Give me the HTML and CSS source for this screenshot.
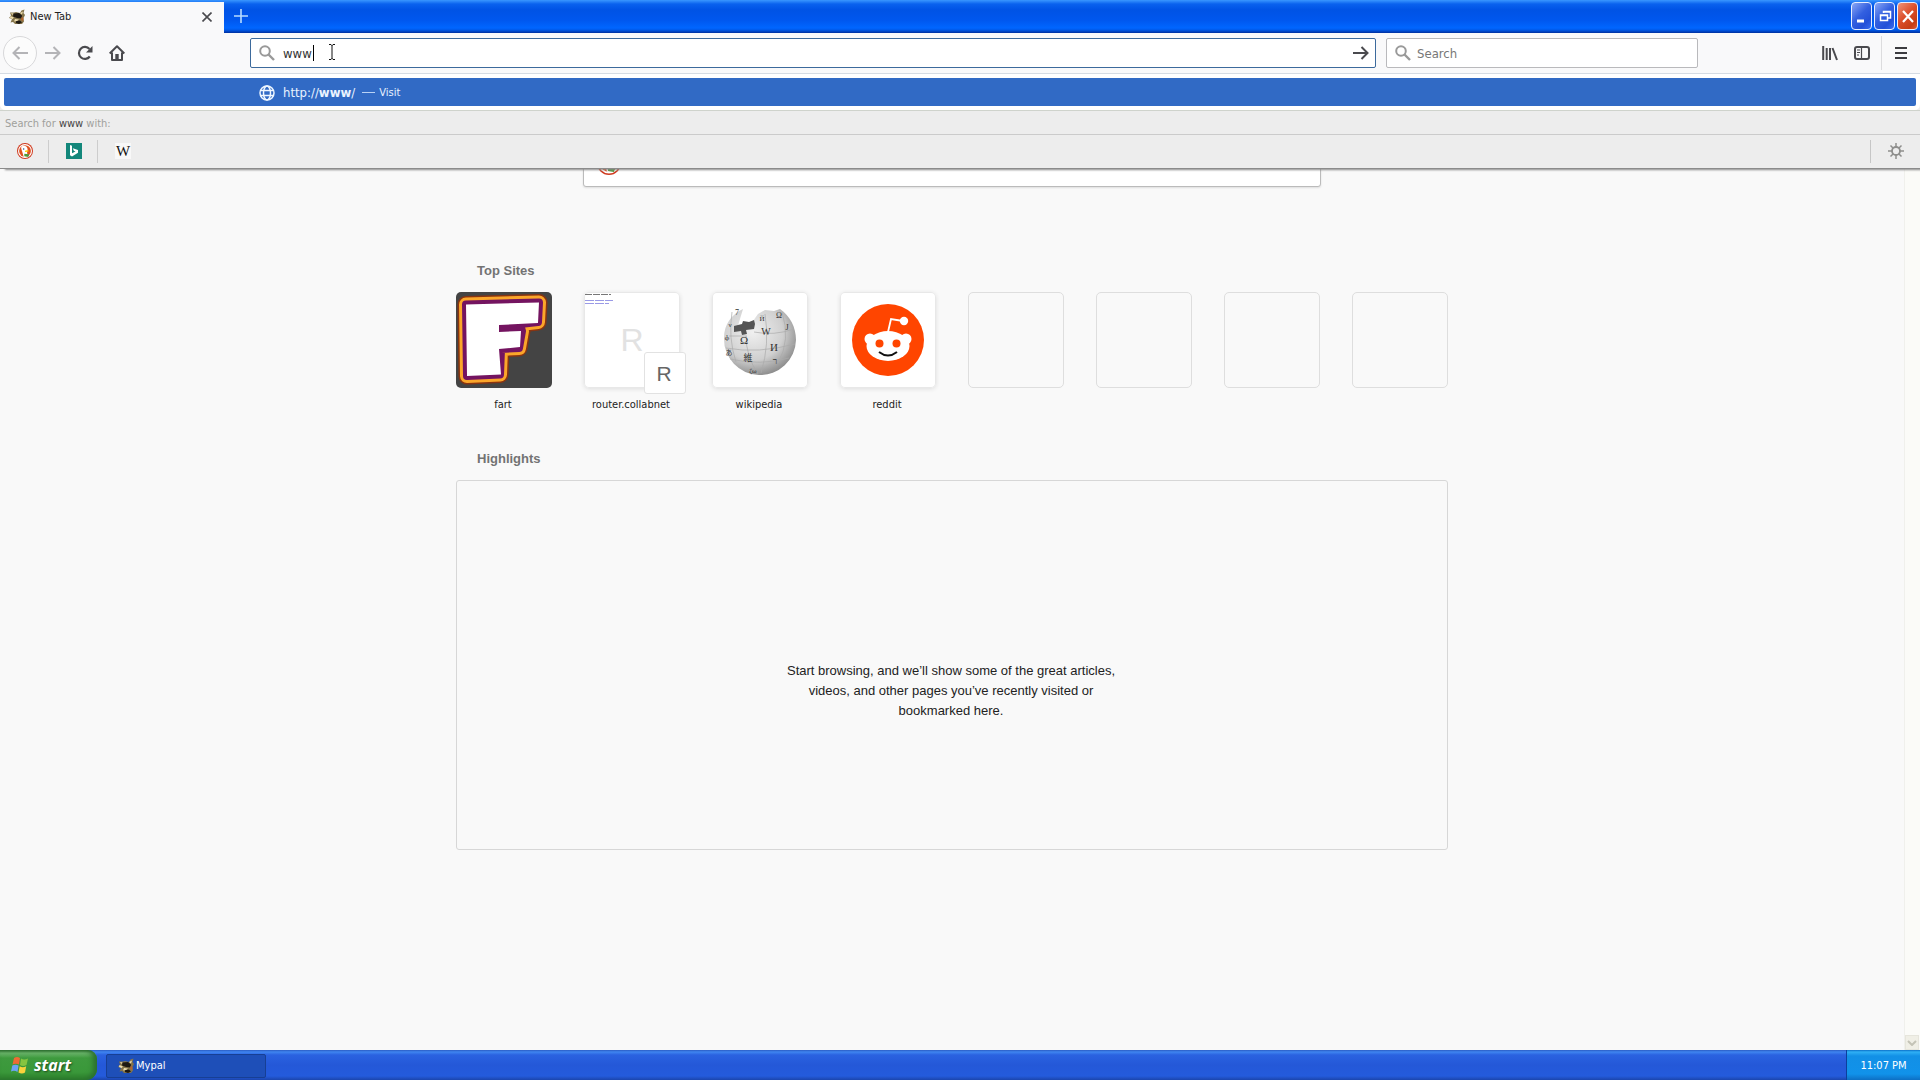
FILE: index.html
```html
<!DOCTYPE html>
<html lang="en">
<head>
<meta charset="utf-8">
<title>New Tab</title>
<link rel="stylesheet" href="styles.css">
</head>
<body>
<svg width="0" height="0" class="defs" aria-hidden="true">
  <symbol id="mypal" viewBox="0 0 16 16">
    <path d="M1 3.500 5 3.500 7 3 11 4 12.500 1.500 15.500.5 14.500 4 16 6 14.500 9 15 12.500 13 15 6 15 4 13 1.500 13.500 3 10 0 9 2 6.500z" fill="#84744a"/>
    <path d="M4.500 4.500 10 4 13 6.500 12.500 9.500 8 9 4 7.500zM7 12l4-.5 2 2-3 1.500-3-1z" fill="#1d1812"/>
    <path d="M1.500 7 5 8.500 3.500 10 1 9zM6 10 10 10.500 8 12 5 12.500zM11 4 14 2.500 13 5.500zM2 4l2.500.5L3.500 6z" fill="#eddcae"/>
    <path d="M12.500 8 14.500 9 14 12 12 11z" fill="#b5652f"/>
  </symbol>
  <symbol id="glass" viewBox="0 0 16 16">
    <circle cx="6" cy="6" r="4.800" fill="none" stroke="#999" stroke-width="2"/>
    <path d="M9.500 9.500 15 15" stroke="#999" stroke-width="2.400"/>
  </symbol>
  <symbol id="duck" viewBox="0 0 24 24">
    <circle cx="12" cy="12" r="12" fill="#cf3a1f"/>
    <circle cx="12" cy="12" r="10.500" fill="#fff"/>
    <circle cx="12" cy="12" r="8.800" fill="#e0501f"/>
    <path d="M7 5c4-2.500 9 0 9 5l-1 3 1 7.500c-2 .8-4 .7-6 .2L7.500 12C6.500 9 5.500 7 7 5z" fill="#fff"/>
    <circle cx="10" cy="9" r="1.200" fill="#2d4f8e"/>
    <path d="M12 11.500c2-1 4-1 6 0-1 1.500-4 2-6 2z" fill="#fdd20a"/>
    <path d="M11 16l7 1-1 4-6-1z" fill="#4c9a3a"/>
  </symbol>
</svg>

<div class="window">
  <header class="chrome">
    <div class="titlebar">
      <div class="tab">
        <svg width="16" height="16"><use href="#mypal"/></svg>
        <span class="tab-title">New Tab</span>
        <button class="plain" aria-label="Close tab">
          <svg width="10" height="10" viewBox="0 0 10 10"><path d="M.5.5l9 9M9.500.5l-9 9" stroke="#4a4a4e" stroke-width="1.600"/></svg>
        </button>
      </div>
      <button class="plain tab-new" aria-label="New tab">
        <svg width="14" height="14" viewBox="0 0 14 14"><path d="M7 0v14M0 7h14" stroke="#b7dcff" stroke-width="1.600"/></svg>
      </button>
      <div class="controls">
        <button class="control" aria-label="Minimize"><svg width="18" height="26" viewBox="0 0 18 26"><path d="M4 18h7" stroke="#fff" stroke-width="3"/></svg></button>
        <button class="control" aria-label="Restore"><svg width="18" height="26" viewBox="0 0 18 26" fill="none" stroke="#fff"><path d="M7.500 10V8.500h7v6.500H12M7 9h8" stroke-width="1.500"/><path d="M4.500 12h7v5.500h-7zM4 12.500h8" stroke-width="1.500"/></svg></button>
        <button class="control control-close" aria-label="Close"><svg width="18" height="26" viewBox="0 0 18 26"><path d="M4 8l10 11M14 8L4 19" stroke="#fff" stroke-width="2.200"/></svg></button>
      </div>
    </div>

    <div class="toolbar">
      <nav class="nav">
        <button class="plain nav-back" aria-label="Back"><svg width="16" height="14" viewBox="0 0 16 14" fill="none" stroke="#b4b4b7" stroke-width="2"><path d="M16 7H1.500M7.500 1l-6 6 6 6"/></svg></button>
        <button class="plain nav-btn" aria-label="Forward"><svg width="16" height="14" viewBox="0 0 16 14" fill="none" stroke="#b4b4b7" stroke-width="2"><path d="M0 7h14.500M8.500 1l6 6-6 6"/></svg></button>
        <button class="plain nav-btn" aria-label="Reload"><svg width="16" height="16" viewBox="0 0 16 16"><path d="M12.800 11.500a6 6 0 1 1-.3-7.500" fill="none" stroke="#4a4a4e" stroke-width="2.200"/><path d="M15.500 1v6.500H9z" fill="#4a4a4e"/></svg></button>
        <button class="plain nav-btn" aria-label="Home"><svg width="16" height="16" viewBox="0 0 16 16"><path d="M.7 8.500 8 1.300l7.300 7.200M3 7.500V15h10V7.500" fill="none" stroke="#4a4a4e" stroke-width="2" stroke-linejoin="round"/><path d="M6.300 14V9h3.400v5z" fill="#4a4a4e"/></svg></button>
      </nav>
      <div class="field url-field">
        <svg width="16" height="16"><use href="#glass"/></svg>
        <input class="field-input" id="url" type="text" value="www" aria-label="Address" size="3">
        <button class="plain" aria-label="Go"><svg width="16" height="14" viewBox="0 0 16 14" fill="none" stroke="#4a4a4e" stroke-width="2"><path d="M0 7h14.500M8.500 1l6 6-6 6"/></svg></button>
        <span class="caret"></span>
        <svg class="pointer" width="8" height="16" viewBox="0 0 8 16"><path d="M1 .5h2l1 1 1-1h2M4 1v14M1 15.500h2l1-1 1 1h2" fill="none" stroke="#111"/></svg>
      </div>
      <div class="field search-field">
        <svg width="16" height="16"><use href="#glass"/></svg>
        <input class="field-input" type="text" placeholder="Search" aria-label="Search">
      </div>
      <div class="tools">
        <button class="plain nav-btn" aria-label="Library"><svg width="16" height="16" viewBox="0 0 16 16"><path d="M1.200 1v14M4.700 3v12M8 3v12M10.500 3l4.500 12" stroke="#4a4a4e" stroke-width="2"/></svg></button>
        <button class="plain nav-btn" aria-label="Sidebars"><svg width="16" height="14" viewBox="0 0 16 14" fill="none" stroke="#4a4a4e"><rect x="1" y="1" width="14" height="12" rx="2" stroke-width="2"/><path d="M7.500 1v12M3 4h3M3 6.500h3M3 9h2" stroke-width="1.200"/></svg></button>
        <span class="tool-line"></span>
        <button class="plain" aria-label="Menu"><svg width="12" height="12" viewBox="0 0 12 12"><path d="M0 1h12M0 6h12M0 11h12" stroke="#3c3c40" stroke-width="2"/></svg></button>
      </div>
    </div>

    <div class="popup">
      <a class="suggestion" href="#">
        <svg width="16" height="16" viewBox="0 0 16 16" fill="none" stroke="#eef6ff" stroke-width="1.500"><circle cx="8" cy="8" r="7"/><ellipse cx="8" cy="8" rx="3.500" ry="7"/><path d="M1.500 5.500h13M1.500 10.500h13"/></svg>
        <span class="suggestion-url">http://<b>www</b>/</span>
        <span class="dash"></span>
        <span class="suggestion-action">Visit</span>
      </a>
      <p class="search-with">Search for <span class="term">www</span> with:</p>
      <div class="engines">
        <button class="plain engine" aria-label="DuckDuckGo"><svg width="16" height="16"><use href="#duck"/></svg></button>
        <button class="plain engine" aria-label="Bing"><svg width="16" height="16" viewBox="0 0 16 16"><path d="M0 0h16v16H0z" fill="#13877b"/><path d="M4 2l2 .8v7.400l3.500-1.700-1.700-.8-1-2.500L12 7v2.800L6 13.500l-2-1.200z" fill="#fff"/></svg></button>
        <button class="plain engine engine-wiki" aria-label="Wikipedia"><span class="wiki-mark">W</span></button>
        <button class="plain engine-settings" aria-label="Search settings"><svg width="16" height="16" viewBox="0 0 16 16" fill="none" stroke="#8e8e8c"><circle cx="8" cy="8" r="4" stroke-width="1.800"/><path d="M8 0v4M8 12v4M0 8h4M12 8h4M2.500 2.500l2.500 2.500M11 11l2.500 2.500M13.500 2.500 11 5M5 11l-2.500 2.500" stroke-width="1.500"/></svg></button>
      </div>
    </div>
  </header>

  <div class="viewport">
    <main class="page">
      <div class="search-card"><svg width="24" height="24"><use href="#duck"/></svg></div>

      <section>
        <h2 class="heading">Top Sites</h2>
        <div class="sites">
          <a class="site" href="#">
            <svg class="tile tile-dark" viewBox="0 0 96 96">
              <g stroke-linejoin="round">
                <path d="M10 12.500 83 10.500 82 30 64 32l2 7-3 17-18 1-1 25.500-33 1.500z" fill="none" stroke="#8a3410" stroke-width="17"/>
                <path d="M10 12.500 83 10.500 82 30 64 32l2 7-3 17-18 1-1 25.500-33 1.500z" fill="#fba62a" stroke="#fba62a" stroke-width="14"/>
                <path d="M10 12.500 83 10.500 82 30 64 32l2 7-3 17-18 1-1 25.500-33 1.500z" fill="#741460" stroke="#741460" stroke-width="8"/>
                <path d="M10 12.500 83 10.500 82 31 43 33v7l22-1-1 16-21 2 2 25.500-34 1.500z" fill="#fff"/>
              </g>
            </svg>
            <span class="site-name">fart</span>
          </a>
          <a class="site" href="#">
            <span class="tile tile-card">
              <svg class="thumb" width="32" height="14" viewBox="0 0 32 14"><path d="M1 2.500h26" stroke="#777" stroke-dasharray="7 1"/><path d="M1 8.500h28M1 11.500h24" stroke="#9a9ae6" stroke-dasharray="9 1"/></svg>
              <span class="letter">R</span>
              <span class="badge">R</span>
            </span>
            <span class="site-name">router.collabnet</span>
          </a>
          <a class="site" href="#">
            <span class="tile tile-card">
              <svg width="96" height="96" viewBox="0 0 96 96">
                <defs><radialGradient id="ball" cx=".4" cy=".35" r=".7"><stop offset="0" stop-color="#f0f0f0"/><stop offset=".6" stop-color="#d0d0d0"/><stop offset="1" stop-color="#858585"/></radialGradient></defs>
                <path d="M31 17c-11 5-19 15-19 29a36 36 0 0 0 72 2c0-13-6-24-16-31l-6 2-9-1-7 4-5 7-5 7-11 1z" fill="url(#ball)"/>
                <path d="M22 34l8-2 1-3 6 1 5-2 1 4-1 5-8 1 1 4-5 1-1-4-7 1z" fill="#555"/>
                <path d="M20 20q-4 26 4 50M34 44q0 20 12 38M53 22q5 30-4 59M70 20q9 28-4 51M14 56q32 6 69-4M18 67q30 7 59-1M42 40q20 4 40-3M17 44h18" fill="none" stroke="#aaa" stroke-width=".7"/>
                <g class="globe-text" text-anchor="middle">
                  <text x="32" y="52" font-size="11">Ω</text><text x="54" y="43" font-size="10">W</text><text x="62" y="59" font-size="11">И</text>
                  <text x="36" y="69" font-size="9">維</text><text x="63" y="72" font-size="9">ר</text><text x="75" y="38" font-size="8">J</text>
                  <text x="50" y="29" font-size="7">Й</text><text x="67" y="26" font-size="8">Ω</text><text x="25" y="23" font-size="8">7</text>
                  <text x="15" y="48" font-size="7">ф</text><text x="18" y="35" font-size="7">ν</text><text x="17" y="63" font-size="7">あ</text><text x="41" y="81" font-size="7">ζω</text>
                </g>
              </svg>
            </span>
            <span class="site-name">wikipedia</span>
          </a>
          <a class="site" href="#">
            <span class="tile tile-card">
              <svg width="96" height="96" viewBox="0 0 96 96">
                <circle cx="48" cy="48" r="36" fill="#ff4500"/>
                <circle cx="30" cy="47" r="5.500" fill="#fff"/><circle cx="66" cy="47" r="5.500" fill="#fff"/>
                <ellipse cx="48" cy="54" rx="21.500" ry="15" fill="#fff"/>
                <path d="M48 40l3-13 12 2" fill="none" stroke="#fff" stroke-width="1.800"/>
                <circle cx="64" cy="29" r="4.200" fill="#fff"/>
                <circle cx="39.500" cy="51.500" r="4" fill="#ff4500"/><circle cx="56.500" cy="51.500" r="4" fill="#ff4500"/>
                <path d="M39 60q9 7 18 0" fill="none" stroke="#111" stroke-width="2"/>
              </svg>
            </span>
            <span class="site-name">reddit</span>
          </a>
          <span class="tile tile-empty"></span>
          <span class="tile tile-empty"></span>
          <span class="tile tile-empty"></span>
          <span class="tile tile-empty"></span>
        </div>
      </section>

      <section class="highlights">
        <h2 class="heading">Highlights</h2>
        <div class="empty-box"><p class="empty-text">Start browsing, and we’ll show some of the great articles, videos, and other pages you’ve recently visited or bookmarked here.</p></div>
      </section>
    </main>
    <div class="scrollbar"><button class="plain scroll-down" aria-label="Scroll down"><svg width="10" height="6" viewBox="0 0 10 6"><path d="M1 1l4 4 4-4" fill="none" stroke="#c4c3b6" stroke-width="2"/></svg></button></div>
  </div>
</div>

<footer class="taskbar">
  <button class="start">
    <svg width="18" height="18" viewBox="0 0 18 18"><path d="M3 2q3-2 6 0L8 8.500Q5 7 1.500 8.500z" fill="#ee6a35"/><path d="M10 2.500q3 2 7 0L15.500 9Q12 11 9 9z" fill="#86c440"/><path d="M1.300 9.500q3-1.500 6.300 0L6.500 16q-3-2-6.500-.5z" fill="#6da3f5"/><path d="M8.700 10.200q3 2 6.500 0L14 16.500q-3 2-6.500 0z" fill="#f9d23c"/></svg>
    <span>start</span>
  </button>
  <button class="task">
    <svg width="16" height="16"><use href="#mypal"/></svg>
    <span>Mypal</span>
  </button>
  <time class="tray">11:07 PM</time>
</footer>
</body>
</html>
```

FILE: styles.css
```css
* { box-sizing: border-box; }

body {
  margin: 0;
  min-height: 100vh;
  display: flex;
  flex-direction: column;
  background: #f9f9f9;
  font: 11px/16px "DejaVu Sans Condensed", "Noto Sans", sans-serif;
  color: #222;
}

svg { display: block; flex: none; }
.defs { position: absolute; }
a { color: inherit; text-decoration: none; }

.plain {
  display: flex;
  align-items: center;
  justify-content: center;
  padding: 0;
  border: 0;
  background: none;
}

.window { flex: 1; display: flex; flex-direction: column; }
.chrome { position: relative; z-index: 1; }

/* Title bar */
.titlebar {
  display: flex;
  height: 33px;
  padding-top: 2px;
  background: linear-gradient(#3a97ff 0, #0a62ee 4px, #0053e5 10px, #0057ee 20px, #0066ff 28px, #0059e8 30px, #002f9e 33px);
}
.tab {
  display: flex;
  align-items: center;
  width: 224px;
  padding: 0 12px 1px 9px;
  background: #f9f9fa;
}
.tab-title { flex: 1; margin-left: 5px; }
.tab-new { width: 33px; height: 28px; }
.controls { display: flex; gap: 2px; margin-left: auto; padding-right: 2px; }
.control {
  display: flex;
  align-items: center;
  justify-content: center;
  width: 21px;
  height: 28px;
  padding: 0;
  border: 1px solid #e6eeff;
  border-radius: 4px;
  background: linear-gradient(135deg, #8aa6f5, #3360e0 45%, #2350d8 75%, #3a6cf0);
}
.control-close { background: linear-gradient(135deg, #ef9479, #dc4f2b 45%, #c63d14 80%, #dd5a34); }

/* Toolbar */
.toolbar {
  display: flex;
  align-items: center;
  height: 41px;
  padding: 0 13px 0 3px;
  border-bottom: 1px solid #d5dbe3;
  background: #f9f9fa;
}
.nav { display: flex; align-items: center; }
.nav-back {
  width: 34px;
  height: 34px;
  border: 1px solid #d8d8da;
  border-radius: 50%;
  background: #fcfcfc;
}
.nav-btn { width: 32px; height: 32px; }
.field {
  position: relative;
  display: flex;
  align-items: center;
  height: 30px;
  padding: 0 7px 0 8px;
  border: 1px solid #b9b9bc;
  border-radius: 2px;
  background: #fff;
}
.url-field { flex: 1; margin: 0 10px 0 117px; padding-right: 6px; border-color: #3c6a9c; }
.search-field { width: 312px; }
.field-input {
  flex: 1;
  min-width: 0;
  height: 24px;
  margin-left: 8px;
  padding: 0;
  border: 0;
  outline: 0;
  background: none;
  font: 13px/16px "DejaVu Sans Condensed", "Noto Sans", sans-serif;
  color: #333;
}
.search-field .field-input { margin-left: 6px; }
.field-input::placeholder { color: #777; opacity: 1; }
.caret { position: absolute; left: 62px; top: 6px; width: 1px; height: 16px; background: #000; }
.pointer { position: absolute; left: 77px; top: 5px; }
.tools { display: flex; align-items: center; margin-left: 116px; }
.tool-line { width: 1px; height: 34px; margin: 0 13px 0 3px; background: #dcdcde; }

/* Address suggestions */
.popup {
  position: absolute;
  top: 100%;
  left: 0;
  right: 0;
  background: #ededed;
  border-bottom: 1px solid #8b8b8b;
  box-shadow: 4px 2px 2px -1px #888;
}
.popup::before { content: ""; display: block; height: 4px; background: #fff; }
.suggestion {
  display: flex;
  align-items: center;
  height: 28px;
  margin: 0 4px;
  padding: 1px 0 0 255px;
  border-radius: 2px;
  background: #316ac5;
  box-shadow: 0 0 0 4px #fff;
  color: #e9f3ff;
}
.suggestion-url { margin-left: 8px; font-size: 13px; }
.dash { width: 13px; height: 1px; margin: 0 4px 0 7px; background: #b9d2f5; }
.suggestion-action { padding-top: 1px; }
.search-with {
  margin: 4px 0 0;
  padding: 5px 5px 2px;
  border-top: 1px solid #cfd3cc;
  border-bottom: 1px solid #cbcbcb;
  color: #a0a09c;
}
.term { color: #444; }
.engines { display: flex; align-items: center; height: 33px; padding-bottom: 1px; }
.engine { width: 49px; height: 23px; padding-left: 2px; border-right: 1px solid #cdcdcd; }
.engine-wiki { border-color: transparent; }
.wiki-mark {
  width: 16px;
  height: 16px;
  background: #f8f8f8;
  text-align: center;
  font: 15px/16px "Liberation Serif", serif;
  color: #111;
}
.engine-settings { width: 50px; height: 23px; margin-left: auto; border-left: 1px solid #c6c6c6; }

/* New tab page */
.viewport { flex: 1; display: flex; }
.page { flex: 1; max-width: 992px; margin: 0 auto; padding-top: 64px; }
.search-card {
  display: flex;
  align-items: center;
  height: 49px;
  margin: 0 127px 74px 127px;
  padding-left: 13px;
  border: 1px solid #bbb;
  border-radius: 3px;
  background: #fff;
  box-shadow: 0 1px 2px #ddd;
}
.heading {
  margin: 0 0 11px;
  padding-left: 21px;
  font: bold 13px/20px "Liberation Sans", sans-serif;
  color: #737373;
}
.sites { display: flex; gap: 32px; }
.site { width: 96px; }
.tile { position: relative; display: block; width: 96px; height: 96px; border-radius: 5px; }
.tile-dark { background: #444; }
.tile-card { background: #fff; box-shadow: inset 0 0 0 1px #e8e8e8, 0 1px 4px #ddd; }
.tile-empty { border: 1px solid #dedede; }
.thumb { position: absolute; left: 0; top: 0; }
.letter { display: block; text-align: center; font: 32px/96px "Liberation Sans", sans-serif; color: #e2e2e2; }
.badge {
  position: absolute;
  right: -6px;
  bottom: -6px;
  width: 42px;
  height: 42px;
  padding-right: 2px;
  border: 1px solid #e2e2e2;
  border-radius: 3px;
  background: #fff;
  text-align: center;
  font: 21px/42px "Liberation Sans", sans-serif;
  color: #666;
}
.globe-text { font-family: "Liberation Serif", "Noto Sans CJK JP", serif; fill: #333; }
.site-name { display: block; margin: 9px 2px 0 0; text-align: center; white-space: nowrap; }
.highlights { margin-top: 36px; }
.empty-box {
  display: flex;
  align-items: center;
  justify-content: center;
  min-height: 370px;
  border: 1px solid #d7d7d7;
  border-radius: 3px;
}
.empty-text {
  width: 340px;
  margin: 0 0 0 -2px;
  padding-top: 52px;
  text-align: center;
  font: 13px/20px "Liberation Sans", sans-serif;
}
.scrollbar { display: flex; align-items: flex-end; width: 16px; background: #fbfbf8; border-left: 1px solid #f0f0ec; }
.scroll-down { width: 14px; height: 15px; background: #f0efe6; border: 1px solid #e6e5dc; }

/* Taskbar */
.taskbar {
  display: flex;
  height: 30px;
  background: linear-gradient(#2a5cc4 0, #3f85f0 2px, #2a62e0 5px, #2458d8 15px, #245bdc 26px, #1b45ad);
  color: #fff;
}
.start {
  display: flex;
  align-items: center;
  gap: 5px;
  width: 97px;
  padding: 0 0 0 11px;
  border: 0;
  border-radius: 0 9px 11px 0;
  background: linear-gradient(#2f6f2f 0, #6bb56b 3px, #3e9a3e 8px, #3a983a 22px, #2a7d2a);
  box-shadow: inset -4px 0 5px #2b7030;
  font: italic bold 16px/24px "Open Sans", sans-serif;
  color: #fff;
  text-shadow: 1px 1px 2px #1c4a1c;
}
.task {
  display: flex;
  align-items: center;
  gap: 2px;
  width: 160px;
  margin: 4px 0 2px 9px;
  padding: 0 0 0 11px;
  border: 1px solid #173f94;
  border-radius: 2px;
  background: #1e4fb8;
  font: 11px/16px "DejaVu Sans Condensed", "Noto Sans", sans-serif;
  color: #fff;
}
.tray {
  width: 74px;
  margin-left: auto;
  border-left: 1px solid #0c3f9c;
  background: linear-gradient(#0c6fc8 0, #2fb0f5 2px, #1290e6 6px, #1192ea 24px, #0d6fc4);
  text-align: center;
  line-height: 31px;
}
```
